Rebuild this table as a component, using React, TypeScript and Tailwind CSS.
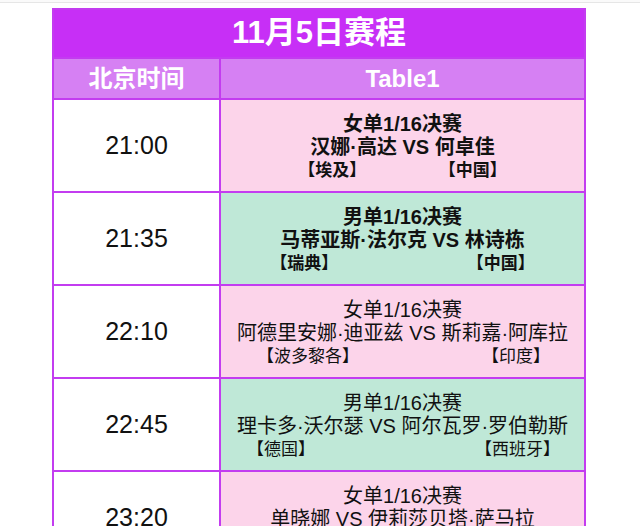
import React from "react";

type Match = {
  time: string;
  event: string;
  names: string;
  left: string;
  right: string;
  bold: boolean;
  tint: "pink" | "green";
  pad: string;
};

const matches: Match[] = [
  { time: "21:00", event: "女单1/16决赛", names: "汉娜·高达 VS 何卓佳", left: "【埃及】", right: "【中国】", bold: true, tint: "pink", pad: "-mx-[12px]" },
  { time: "21:35", event: "男单1/16决赛", names: "马蒂亚斯·法尔克 VS 林诗栋", left: "【瑞典】", right: "【中国】", bold: true, tint: "green", pad: "-mx-[10px]" },
  { time: "22:10", event: "女单1/16决赛", names: "阿德里安娜·迪亚兹 VS 斯莉嘉·阿库拉", left: "【波多黎各】", right: "【印度】", bold: false, tint: "pink", pad: "pl-[20px] pr-[18px]" },
  { time: "22:45", event: "男单1/16决赛", names: "理卡多·沃尔瑟 VS 阿尔瓦罗·罗伯勒斯", left: "【德国】", right: "【西班牙】", bold: false, tint: "green", pad: "pl-[10px] pr-[8px]" },
  { time: "23:20", event: "女单1/16决赛", names: "单晓娜 VS 伊莉莎贝塔·萨马拉", left: "【中国】", right: "【意大利】", bold: false, tint: "pink", pad: "px-[10px]" },
];

function MatchRow({ m }: { m: Match }) {
  return (
    <div className="grid grid-cols-[167px_1fr] h-[93px] border-t-2 border-[#c33cf0]">
      <div className="bg-white border-r-2 border-[#c33cf0] flex items-center justify-center text-[25px] text-[#111]">
        {m.time}
      </div>
      <div
        className={
          (m.tint === "pink" ? "bg-[#fcd4ea]" : "bg-[#bfe8d7]") +
          " flex items-center justify-center pt-[4px] text-[#111]"
        }
      >
        <div className={(m.bold ? "font-bold" : "font-normal") + " inline-flex flex-col items-stretch"}>
          <div className="text-[20px] leading-[23px] text-center">{m.event}</div>
          <div className="text-[20px] leading-[23px] text-center whitespace-nowrap">{m.names}</div>
          <div className={"flex justify-between text-[17px] leading-[23px] whitespace-nowrap " + m.pad}>
            <span>{m.left}</span>
            <span>{m.right}</span>
          </div>
        </div>
      </div>
    </div>
  );
}

export default function App() {
  return (
    <div
      className="w-[640px] h-[526px] overflow-hidden bg-white"
      style={{ fontFamily: '"Liberation Sans", "Noto Sans CJK SC", sans-serif' }}
    >
      <div className="h-[3px] border-b border-[#e6e6e6] bg-[#fafafa]" />
      <div className="ml-[52px] mt-[5px] w-[534px] border-2 border-[#c33cf0]">
        <div className="h-[47px] bg-[#c72ff6] flex items-center justify-center text-white font-bold text-[31px]">
          11月5日赛程
        </div>
        <div className="grid grid-cols-[167px_1fr] h-[41px] border-t-2 border-[#c33cf0] bg-[#d680f3] text-white font-bold text-[24px]">
          <div className="flex items-center justify-center border-r-2 border-[#c33cf0]">北京时间</div>
          <div className="flex items-center justify-center">Table1</div>
        </div>
        {matches.map((m) => (
          <MatchRow key={m.time} m={m} />
        ))}
      </div>
    </div>
  );
}
